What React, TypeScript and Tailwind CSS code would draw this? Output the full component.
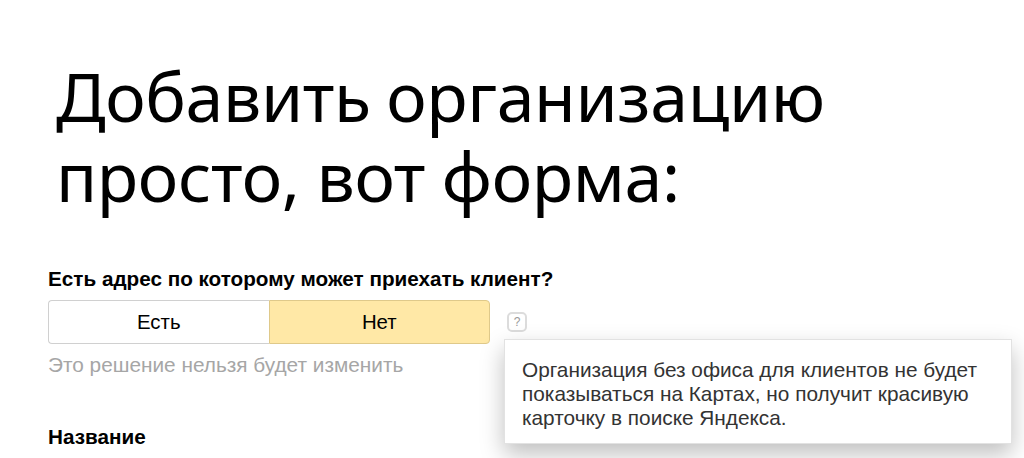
export default function App() {
  return (
    <div className="h-[458px] w-[1024px] overflow-hidden bg-white pl-[48px] pt-[56px] font-['Liberation_Sans',sans-serif] text-black">
      <h1 className="ml-[8px] text-[68px] leading-[80px] font-[450] tracking-[-0.35px] font-['Noto_Sans',sans-serif]">
        <span className="[word-spacing:-2px]">Добавить организацию</span>
        <br />
        <span className="[word-spacing:-0.5px]">просто, вот форма:</span>
      </h1>

      <p className="mt-[51px] text-[20.7px] leading-[24px] font-bold">Есть адрес по которому может приехать клиент?</p>

      <div className="relative mt-[9px] flex items-center">
        <div className="flex h-[44px] w-[442px] text-[20.4px]">
          <button className="flex-1 rounded-l-[4px] border border-r-0 border-[#d0d0d0] bg-white">Есть</button>
          <button className="flex-1 rounded-r-[4px] border border-[#dfc98a] bg-[#ffe8a6]">Нет</button>
        </div>
        <span className="ml-[17px] flex h-[20px] w-[20px] items-center justify-center rounded-[5px] border-2 border-[#dcdcdc] text-[12px] text-[#999]">?</span>
        <div className="absolute left-[456px] top-[39px] h-[105px] w-[508px] border border-[#e2e2e2] bg-white px-[17px] pt-[18px] text-[20.8px] leading-[24px] text-[#333] shadow-[0_10px_22px_rgba(0,0,0,0.25)]">
          Организация без офиса для клиентов не будет показываться на Картах, но получит красивую карточку в поиске Яндекса.
        </div>
      </div>

      <p className="mt-[9px] text-[20.8px] leading-[24px] text-[#a6a6a6]">Это решение нельзя будет изменить</p>
      <p className="mt-[48px] text-[20.7px] leading-[24px] font-bold">Название</p>
    </div>
  );
}
